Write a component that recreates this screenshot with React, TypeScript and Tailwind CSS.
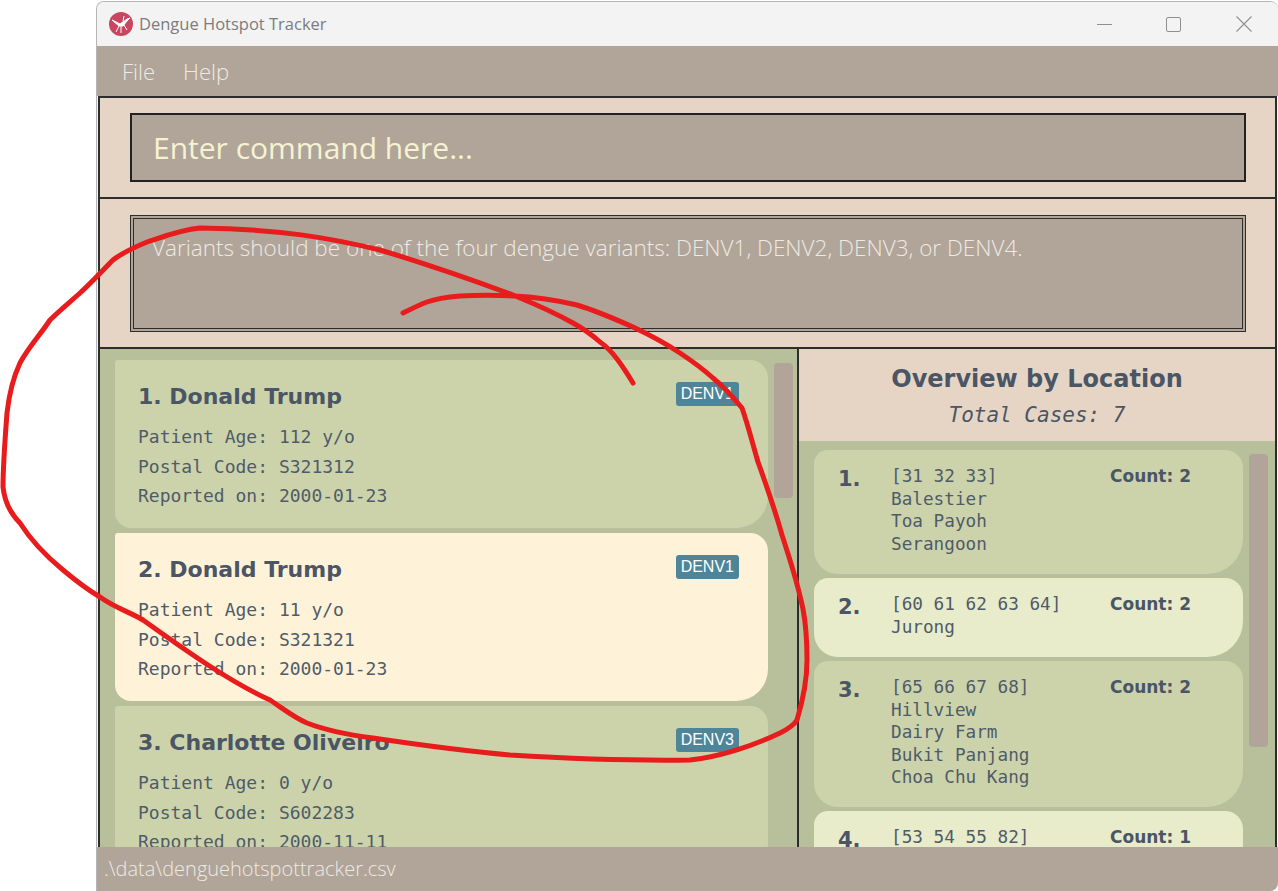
import React from 'react';

const patients = [
    { name: '1. Donald Trump', age: '112 y/o', postal: 'S321312', date: '2000-01-23', variant: 'DENV1', selected: false },
    { name: '2. Donald Trump', age: '11 y/o', postal: 'S321321', date: '2000-01-23', variant: 'DENV1', selected: true },
    { name: '3. Charlotte Oliveiro', age: '0 y/o', postal: 'S602283', date: '2000-11-11', variant: 'DENV3', selected: false },
];

const locations = [
    { no: '1.', lines: ['[31 32 33]', 'Balestier', 'Toa Payoh', 'Serangoon'], count: 2, alt: false, height: 'h-[124px]' },
    { no: '2.', lines: ['[60 61 62 63 64]', 'Jurong'], count: 2, alt: true, height: 'h-[79px]' },
    { no: '3.', lines: ['[65 66 67 68]', 'Hillview', 'Dairy Farm', 'Bukit Panjang', 'Choa Chu Kang'], count: 2, alt: false, height: 'h-[146px]' },
    { no: '4.', lines: ['[53 54 55 82]'], count: 1, alt: true, height: 'h-[80px]' },
];

const PatientCard = ({ p }: { p: (typeof patients)[number] }) => (
    <div className={`relative h-[168px] shrink-0 rounded-tl-[3px] rounded-tr-[18px] rounded-br-[32px] rounded-bl-[16px] pl-[23px] pt-[23px] ${p.selected ? 'bg-[#fef3d9]' : 'bg-[#ccd3ab]'}`}>
        <div className="flex justify-between pr-[29px]">
            <div className="font-['DejaVu_Sans'] text-[22px] leading-[28px] font-bold text-[#4a5565]">{p.name}</div>
            <div className="mt-[-1px] h-[24px] rounded-[3px] bg-[#4f8599] px-[5px] font-['Liberation_Sans'] text-[16px] leading-[24px] text-white">{p.variant}</div>
        </div>
        <div className="mt-[11px] font-['DejaVu_Sans_Mono'] text-[18px] leading-[29.5px] text-[#4f5b69]">
            <div>Patient Age: {p.age}</div>
            <div>Postal Code: {p.postal}</div>
            <div>Reported on: {p.date}</div>
        </div>
    </div>
);

const LocationCard = ({ l }: { l: (typeof locations)[number] }) => (
    <div className={`flex ${l.height} shrink-0 rounded-tl-[14px] rounded-tr-[18px] rounded-br-[36px] rounded-bl-[24px] pt-[15px] ${l.alt ? 'bg-[#e8ecca]' : 'bg-[#ccd3ab]'}`}>
        <div className="mt-[1px] w-[77px] pl-[24px] font-['DejaVu_Sans'] text-[21px] leading-[26px] font-bold text-[#4a5565]">{l.no}</div>
        <div className="w-[219px] font-['DejaVu_Sans_Mono'] text-[17.7px] leading-[22.5px] text-[#4f5b69]">
            {l.lines.map((line) => (
                <div key={line}>{line}</div>
            ))}
        </div>
        <div className="font-['DejaVu_Sans'] text-[17px] leading-[22px] font-bold text-[#4a5565]">Count: {l.count}</div>
    </div>
);

export default function App() {
    return (
        <div className="relative h-[891px] w-[1278px] overflow-hidden bg-white">
            {/* Application window */}
            <div className="ml-[96px] mt-[1px] flex h-[890px] w-[1182px] flex-col overflow-hidden rounded-t-[8px] rounded-br-[8px] border-l border-t border-[#b5b5b5] bg-[#f3f3f3]">
                {/* Title bar */}
                <div className="flex h-[44px] shrink-0 items-center bg-[#f3f3f3] pl-[12px]">
                    <svg width="24" height="24" viewBox="0 0 24 24" className="shrink-0">
                        <circle cx="12" cy="12" r="12" fill="#c8465f" />
                        <path d="M3 8l8 4 7-5 3-1-3 3-4 5-4 0zM10 14l-3 6M12 14l0 7M15 13l3 5M14 9l1-5" stroke="#ffffff" strokeWidth="1" fill="#ffffff" />
                    </svg>
                    <span className="ml-[6px] font-['Open_Sans'] text-[16.5px] text-[#7c7c7c]">Dengue Hotspot Tracker</span>
                    <div className="ml-auto flex items-center pr-[26px]">
                        <div className="h-px w-[15px] bg-[#8f8f8f]" />
                        <div className="ml-[54px] h-[15px] w-[15px] rounded-[2px] border border-[#8f8f8f]" />
                        <svg width="16" height="16" viewBox="0 0 16 16" className="ml-[55px]">
                            <path d="M0.5 0.5L15.5 15.5M15.5 0.5L0.5 15.5" stroke="#8f8f8f" strokeWidth="1.1" />
                        </svg>
                    </div>
                </div>

                {/* Menu bar */}
                <div className="flex h-[50px] shrink-0 items-center gap-[28px] bg-[#b1a599] pl-[25px] font-['Open_Sans'] text-[22px] font-light text-[#eeeae4]">
                    <span>File</span>
                    <span>Help</span>
                </div>

                {/* Command box */}
                <div className="mr-[1px] ml-[1px] h-[103px] shrink-0 border-2 border-[#2d2d2d] bg-[#e6d5c5] pt-[15px] pr-[29px] pl-[30px]">
                    <div className="flex h-[69px] items-center border-2 border-[#222222] bg-[#b1a599] pl-[21px] font-['Open_Sans'] text-[30px] text-[#f6f3d3]">
                        Enter command here...
                    </div>
                </div>

                {/* Result display */}
                <div className="mr-[1px] ml-[1px] h-[150px] shrink-0 border-x-2 border-b-2 border-[#2d2d2d] bg-[#e6d5c5] pt-[16px] pr-[29px] pl-[30px]">
                    <div className="h-[117px] border-[4px] border-double border-[#2d2d2d] bg-[#b1a599] pt-[12px] pl-[18px] font-['Open_Sans'] text-[22.5px] font-light text-[#eeeae4]">
                        Variants should be one of the four dengue variants: DENV1, DENV2, DENV3, or DENV4.
                    </div>
                </div>

                {/* Main panels */}
                <div className="mr-[1px] ml-[1px] flex min-h-0 flex-1 border-x-2 border-[#2d2d2d]">
                    <div className="flex w-[699px] shrink-0 overflow-hidden border-r-2 border-[#2d2d2d] bg-[#b8c09b] pl-[15px]">
                        <div className="flex w-[653px] shrink-0 flex-col gap-[5px] pt-[11px]">
                            {patients.map((p) => (
                                <PatientCard key={p.name} p={p} />
                            ))}
                        </div>
                        <div className="mt-[14px] ml-[6px] h-[135px] w-[19px] rounded-[4px] bg-[#b1a599]" />
                    </div>
                    <div className="flex min-w-0 flex-1 flex-col overflow-hidden">
                        <div className="h-[92px] shrink-0 bg-[#e6d5c5] pt-[14px] text-center text-[#4a5565]">
                            <div className="font-['DejaVu_Sans'] text-[24px] leading-[32px] font-bold">Overview by Location</div>
                            <div className="mt-[7px] font-['DejaVu_Sans_Mono'] text-[21px] leading-[26px] italic">Total Cases: 7</div>
                        </div>
                        <div className="flex min-h-0 flex-1 bg-[#b8c09b] pl-[15px]">
                            <div className="flex w-[429px] shrink-0 flex-col gap-[4px] pt-[9px]">
                                {locations.map((l) => (
                                    <LocationCard key={l.no} l={l} />
                                ))}
                            </div>
                            <div className="mt-[13px] ml-[6px] h-[293px] w-[19px] rounded-[4px] bg-[#b1a599]" />
                        </div>
                    </div>
                </div>

                {/* Status bar */}
                <div className="flex h-[44px] shrink-0 items-center bg-[#b1a599] pl-[7px] font-['Open_Sans'] text-[20px] font-light text-[#eeeae4]">
                    .\data\denguehotspottracker.csv
                </div>
            </div>

            {/* Red pen annotation on top of the screenshot */}
            <svg width="1278" height="891" viewBox="0 0 1278 891" className="pointer-events-none absolute top-0 left-0" fill="none">
                <path
                    d="M633 383C622 365 612 350 600 342C590 333 582 328 573 323C550 310 530 302 513 295C470 279 430 265 380 250C330 238 280 229 200 228C180 230 165 236 147 242C135 247 123 252 113 260C103 270 92 282 80 293C70 302 60 310 50 320C40 335 28 348 20 363C12 380 9 395 7 413C5 440 3 465 3 487C5 505 12 515 20 523C32 542 46 556 63 570C75 580 88 590 100 597C115 608 130 612 143 620C185 650 230 682 270 700C285 710 295 718 307 723C325 730 350 735 373 738C420 745 465 751 510 755C560 758 620 761 690 760C720 757 755 745 780 733C790 728 794 725 797 720C803 700 807 680 807 660C807 640 806 625 803 609C797 580 790 560 782 535C775 510 767 487 758 462C753 445 748 425 742 408C733 397 725 388 713 378C702 368 692 361 680 353C665 343 650 335 633 327C615 319 597 311 577 305C556 300 535 297 513 296C495 295 478 295 460 296C448 297 438 298 427 302C419 305 411 309 403 313"
                    stroke="#e81c1c"
                    strokeWidth="5"
                    strokeLinecap="round"
                    strokeLinejoin="round"
                />
            </svg>
        </div>
    );
}
